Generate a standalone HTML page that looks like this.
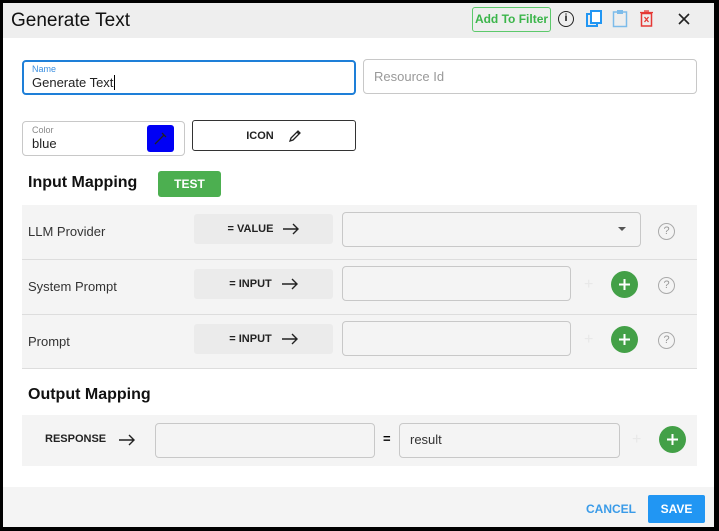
<!DOCTYPE html>
<html><head><style>
*{box-sizing:border-box;margin:0;padding:0}
body{width:719px;height:531px;background:#000;font-family:"Liberation Sans",sans-serif;position:relative;overflow:hidden}
.a{position:absolute}
.win{left:3px;top:3px;width:711px;height:524px;background:#fff}
.fld{position:absolute;border:1px solid #c8c8c8;border-radius:4px;background:#fff}
.row{position:absolute;left:22px;width:675px;background:#f4f4f4;border-bottom:1px solid #ddd}
.lbl{position:absolute;left:6px;font-size:13px;color:#333}
.chip{position:absolute;left:172px;width:139px;height:30px;background:#ebebeb;border-radius:3px;font-size:11px;font-weight:bold;color:#222;display:flex;align-items:center;justify-content:center;gap:10px}
.in{position:absolute;border:1px solid #c8c8c8;border-radius:4px;background:#f4f4f4}
.plus{position:absolute;width:27px;height:27px;border-radius:50%;background:#43a047}
.fp{position:absolute;color:#e8e8e8;font-size:16px}
.q{position:absolute;width:17px;height:17px;border:1.3px solid #aaa;border-radius:50%;color:#999;font-size:11px;text-align:center;line-height:15px}
</style></head><body>
<div class="a win"></div>
<div class="a" style="left:3px;top:3px;width:711px;height:35px;background:#eeeeee"></div>
<div class="a" style="left:11px;top:10px;font-size:19px;color:#111">Generate Text</div>
<div class="a" style="left:472px;top:7px;width:79px;height:25px;border:1.5px solid #5cc96b;border-radius:3px;color:#3bb54a;font-size:12px;font-weight:bold;text-align:center;line-height:22px">Add To Filter</div>
<div class="a" style="left:558px;top:11px;width:16px;height:16px;border:1.5px solid #222;border-radius:50%;font-size:10px;font-weight:bold;text-align:center;line-height:13px">i</div>
<svg class="a" style="left:586px;top:10px" width="16" height="18"><rect x="1" y="4" width="10" height="12" fill="none" stroke="#2196f3" stroke-width="2"/><rect x="5" y="1" width="10" height="12" fill="#fff" stroke="#2196f3" stroke-width="2"/></svg>
<svg class="a" style="left:612px;top:9px" width="16" height="19"><rect x="1.5" y="3" width="13" height="14.5" fill="none" stroke="#7cbbea" stroke-width="1.5"/><rect x="5" y="1" width="6" height="4" fill="#7cbbea"/></svg>
<svg class="a" style="left:640px;top:10px" width="13" height="17"><rect x="1.5" y="3.5" width="10" height="12.5" fill="none" stroke="#e53935" stroke-width="1.5"/><path d="M0 2.5h13M4 1h5M4.5 7l4 5M8.5 7l-4 5" stroke="#e53935" stroke-width="1.3"/></svg>
<svg class="a" style="left:678px;top:13px" width="12" height="12"><path d="M1 1l10 10M11 1L1 11" stroke="#222" stroke-width="1.6"/></svg>

<div class="fld" style="left:22px;top:60px;width:334px;height:35px;border:2px solid #1e7fd8"></div>
<div class="a" style="left:32px;top:64px;font-size:9px;color:#3b8fe0">Name</div>
<div class="a" style="left:32px;top:75px;font-size:13px;color:#222">Generate Text<span style="border-left:1px solid #000;margin-left:1px"></span></div>
<div class="fld" style="left:363px;top:59px;width:334px;height:35px"></div>
<div class="a" style="left:374px;top:69px;font-size:13px;color:#999">Resource Id</div>

<div class="fld" style="left:22px;top:121px;width:163px;height:35px"></div>
<div class="a" style="left:32px;top:125px;font-size:9px;color:#888">Color</div>
<div class="a" style="left:32px;top:136px;font-size:13px;color:#222">blue</div>
<div class="a" style="left:147px;top:125px;width:27px;height:27px;background:#0000f5;border-radius:3px"></div>
<svg class="a" style="left:153px;top:130px" width="15" height="16"><path d="M2 14l9-9M9 3l4 4" stroke="#222" stroke-width="1.3" fill="none"/></svg>
<div class="a" style="left:192px;top:120px;width:164px;height:31px;border:1.3px solid #333;border-radius:3px;font-size:11px;font-weight:bold;color:#222;display:flex;align-items:center;justify-content:center;gap:14px">ICON <svg width="14" height="14"><path d="M2 12l1-3 7-7 2 2-7 7z M9 3l2 2" stroke="#222" stroke-width="1.3" fill="none"/></svg></div>

<div class="a" style="left:28px;top:174px;font-size:16px;font-weight:bold;color:#111">Input Mapping</div>
<div class="a" style="left:158px;top:171px;width:63px;height:26px;background:#4caf50;border-radius:3px;color:#fff;font-size:12px;font-weight:bold;text-align:center;line-height:26px">TEST</div>

<div class="row" style="top:205px;height:55px">
<div class="lbl" style="top:19px">LLM Provider</div>
<div class="chip" style="top:9px">= VALUE <svg width="16" height="12"><path d="M0 6h15M10 1l5 5-5 5" stroke="#222" stroke-width="1.4" fill="none"/></svg></div>
<div class="in" style="left:320px;top:7px;width:299px;height:35px;background:#f4f4f4"></div>
<div class="a" style="left:596px;top:22px;border:4px solid transparent;border-top:4px solid #555"></div>
<div class="q" style="left:636px;top:18px">?</div>
</div>
<div class="row" style="top:260px;height:55px">
<div class="lbl" style="top:19px">System Prompt</div>
<div class="chip" style="top:9px">= INPUT <svg width="16" height="12"><path d="M0 6h15M10 1l5 5-5 5" stroke="#222" stroke-width="1.4" fill="none"/></svg></div>
<div class="in" style="left:320px;top:6px;width:229px;height:35px"></div>
<div class="fp" style="left:562px;top:16px">+</div>
<div class="plus" style="left:589px;top:11px"><svg width="27" height="27"><path d="M13.5 8v11M8 13.5h11" stroke="#fff" stroke-width="2"/></svg></div>
<div class="q" style="left:636px;top:17px">?</div>
</div>
<div class="row" style="top:315px;height:54px">
<div class="lbl" style="top:19px">Prompt</div>
<div class="chip" style="top:9px">= INPUT <svg width="16" height="12"><path d="M0 6h15M10 1l5 5-5 5" stroke="#222" stroke-width="1.4" fill="none"/></svg></div>
<div class="in" style="left:320px;top:6px;width:229px;height:35px"></div>
<div class="fp" style="left:562px;top:16px">+</div>
<div class="plus" style="left:589px;top:11px"><svg width="27" height="27"><path d="M13.5 8v11M8 13.5h11" stroke="#fff" stroke-width="2"/></svg></div>
<div class="q" style="left:636px;top:17px">?</div>
</div>

<div class="a" style="left:28px;top:386px;font-size:16px;font-weight:bold;color:#111">Output Mapping</div>
<div class="row" style="top:415px;height:51px;border:none">
<div class="a" style="left:23px;top:18px;font-size:11px;font-weight:bold;color:#222">RESPONSE</div>
<svg class="a" style="left:97px;top:19px" width="16" height="12"><path d="M0 6h15M10 1l5 5-5 5" stroke="#222" stroke-width="1.4" fill="none"/></svg>
<div class="in" style="left:133px;top:8px;width:220px;height:35px"></div>
<div class="a" style="left:361px;top:16px;font-size:13px;font-weight:bold">=</div>
<div class="in" style="left:377px;top:8px;width:221px;height:35px"></div>
<div class="a" style="left:388px;top:17px;font-size:13px;color:#333">result</div>
<div class="fp" style="left:610px;top:16px">+</div>
<div class="plus" style="left:637px;top:11px"><svg width="27" height="27"><path d="M13.5 8v11M8 13.5h11" stroke="#fff" stroke-width="2"/></svg></div>
</div>

<div class="a" style="left:3px;top:487px;width:711px;height:40px;background:#f4f4f4"></div>
<div class="a" style="left:586px;top:502px;font-size:12px;font-weight:bold;color:#3a9be8">CANCEL</div>
<div class="a" style="left:648px;top:495px;width:57px;height:28px;background:#2196f3;border-radius:2px;color:#fff;font-size:12px;font-weight:bold;text-align:center;line-height:28px">SAVE</div>
</body></html>
